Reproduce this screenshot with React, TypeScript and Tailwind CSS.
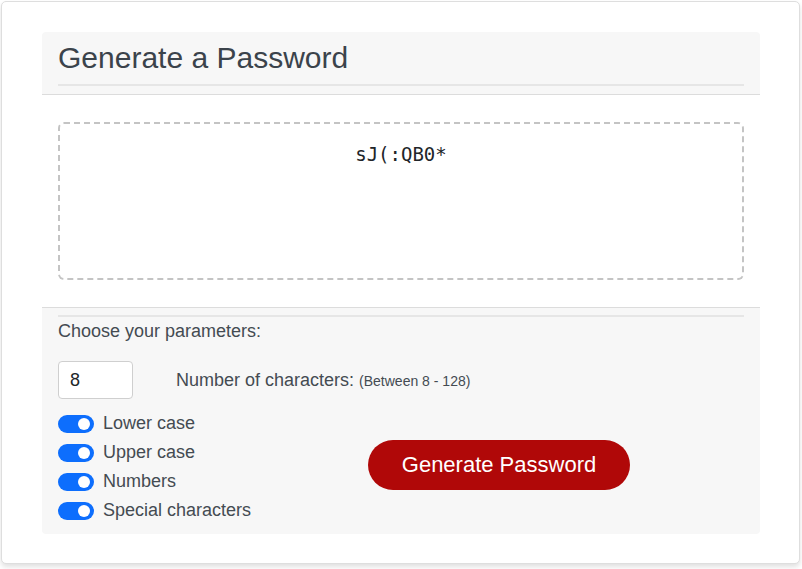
import React, { useState } from 'react';

const options = [
    { id: 'lower', label: 'Lower case' },
    { id: 'upper', label: 'Upper case' },
    { id: 'numbers', label: 'Numbers' },
    { id: 'special', label: 'Special characters' },
];

const Toggle = ({ on, onClick }: { on: boolean; onClick: () => void }) => (
    <button
        onClick={onClick}
        className={`relative w-[36px] h-[18px] rounded-full shrink-0 ${on ? 'bg-[#0d6efd]' : 'bg-white border border-[#bbb]'}`}
    >
        <span
            className={`absolute top-[3px] w-[12px] h-[12px] rounded-full ${on ? 'right-[4px] bg-white' : 'left-[4px] bg-[#bbb]'}`}
        ></span>
    </button>
);

const App = () => {
    const [length, setLength] = useState('8');
    const [checked, setChecked] = useState<Record<string, boolean>>({
        lower: true,
        upper: true,
        numbers: true,
        special: true,
    });

    return (
        <div className="min-h-[569px] bg-white pt-[1px] pl-[1px] font-['Liberation_Sans',Arial,sans-serif]">
            {/* Card */}
            <div className="w-[799px] h-[563px] border border-[#dedede] rounded-[5px] bg-white shadow-[0_3px_5px_rgba(0,0,0,0.12)] pt-[30px] pl-[40px]">
                <div className="w-[718px] rounded-[4px] overflow-hidden">
                    {/* Header */}
                    <div className="bg-[#f7f7f7] px-4 pt-[8px] pb-[8px] border-b border-[#dcdcdc]">
                        <h1 className="text-[30px] leading-[36px] text-[#3b434b] pb-[8px] border-b-2 border-[#e6e6e6]">
                            Generate a Password
                        </h1>
                    </div>

                    {/* Password output */}
                    <div className="bg-white px-4 py-[27px] border-b border-[#dcdcdc]">
                        <div className="h-[158px] border-2 border-dashed border-[#c4c4c4] rounded-[6px] pt-[16px] text-center">
                            <p className="font-['DejaVu_Sans_Mono',monospace] text-[19px] leading-[28px] text-[#212529]">
                                sJ(:QB0*
                            </p>
                        </div>
                    </div>

                    {/* Parameters */}
                    <div className="bg-[#f7f7f7] px-4 pt-[7px] pb-[9px] text-[#444b52]">
                        <div className="border-t-2 border-[#e6e6e6]"></div>
                        <p className="text-[18px] leading-[22px] mt-[3px]">Choose your parameters:</p>

                        <div className="flex items-center mt-[19px]">
                            <input
                                type="text"
                                value={length}
                                onChange={(e) => setLength(e.target.value)}
                                className="w-[75px] h-[38px] bg-white border border-[#cfcfcf] rounded-[4px] px-[11px] text-[18px] text-[#212529] focus:outline-none"
                            />
                            <label className="ml-[43px] text-[18px]">
                                Number of characters: <span className="text-[14px]">(Between 8 - 128)</span>
                            </label>
                        </div>

                        <div className="flex items-center mt-[10px]">
                            <div className="w-[310px] flex flex-col">
                                {options.map((opt) => (
                                    <div key={opt.id} className="h-[29px] flex items-center gap-[9px]">
                                        <Toggle
                                            on={checked[opt.id]}
                                            onClick={() => setChecked({ ...checked, [opt.id]: !checked[opt.id] })}
                                        />
                                        <span className="text-[18px] leading-[22px] -mt-[2px]">{opt.label}</span>
                                    </div>
                                ))}
                            </div>
                            <button className="w-[262px] h-[50px] rounded-full bg-[#b00808] text-white text-[22px] -mt-[5px]">
                                Generate Password
                            </button>
                        </div>
                    </div>
                </div>
            </div>
        </div>
    );
};

export default App;
